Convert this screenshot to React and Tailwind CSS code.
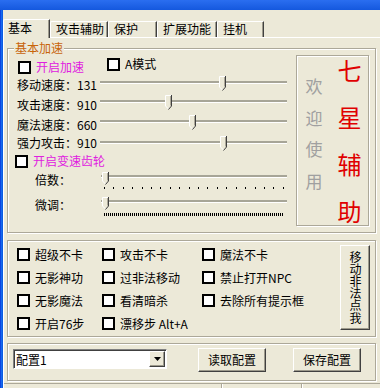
import React from 'react';

const etched = 'border border-[#aca899] shadow-[inset_1px_1px_0_#fff,1px_1px_0_#fff]';
const raised =
  'border border-t-white border-l-white border-r-[#404040] border-b-[#404040] shadow-[inset_-1px_-1px_0_#9d9a8c]';

const tabs = [
  { label: '基本', w: 'w-[47px]', active: true },
  { label: '攻击辅助', w: 'w-[58px]' },
  { label: '保护', w: 'w-[49px]' },
  { label: '扩展功能', w: 'w-[60px]' },
  { label: '挂机', w: 'w-[47px]' },
];

const speedRows = [
  { label: '移动速度：131', pos: 122, track: 'mt-[6px]', h: 'h-[20px]' },
  { label: '攻击速度：910', pos: 68, track: 'mt-[5px]', h: 'h-[20px]' },
  { label: '魔法速度：660', pos: 92, track: 'mt-[5px]', h: 'h-[20px]' },
  { label: '强力攻击：910', pos: 123, track: 'mt-[6px]', h: 'h-[16px]' },
];

const optionRows = [
  ['超级不卡', '攻击不卡', '魔法不卡'],
  ['无影神功', '过非法移动', '禁止打开NPC'],
  ['无影魔法', '看清暗杀', '去除所有提示框'],
  ['开启76步', '漂移步 Alt+A'],
];

const CheckBox = ({ label, className = '', labelClass = '' }) => (
  <div className={`flex items-center gap-[5px] ${className}`}>
    <span className="w-[13px] h-[13px] shrink-0 border-2 border-black bg-white" />
    <span className={`whitespace-nowrap leading-[14px] ${labelClass}`}>{label}</span>
  </div>
);

const Thumb = ({ small }) => {
  const h = small ? 13 : 15;
  const b = h - 4;
  return (
    <svg width="7" height={h} viewBox={`0 0 7 ${h}`}>
      <path d={`M0 0H7V${b}L3.5 ${h}L0 ${b}Z`} fill="#ECE9D8" />
      <path d={`M0.5 ${b}V0.5H6`} stroke="#fff" fill="none" />
      <path d={`M0.5 ${b}L3.5 ${h - 1}`} stroke="#fff" fill="none" />
      <path d={`M6.5 0V${b}L3.5 ${h - 0.5}`} stroke="#404040" fill="none" />
      <path d={`M5.5 1V${b - 0.5}`} stroke="#aca899" fill="none" />
    </svg>
  );
};

const Slider = ({ pos, width, trackClass, small, ticks }) => (
  <div className={`shrink-0 ${width}`}>
    <div className={`relative h-[3px] border-t-2 border-[#a7a597] bg-white ${trackClass}`}>
      <div className={`absolute ${small ? 'top-[-5px]' : 'top-[-7px]'}`} style={{ left: pos - 3 }}>
        <Thumb small={small} />
      </div>
    </div>
    {ticks === 'sparse' && (
      <div className="mt-[9px] px-[3px] flex justify-between">
        {Array.from({ length: 20 }).map((_, i) => (
          <span key={i} className="w-px h-[2px] bg-black" />
        ))}
      </div>
    )}
    {ticks === 'dense' && (
      <div className="mt-[10px] mx-[3px] h-[3px] bg-[repeating-linear-gradient(90deg,#000_0_1px,transparent_1px_2px)]" />
    )}
  </div>
);

export default function App() {
  return (
    <div className="w-[380px] h-[388px] overflow-hidden bg-[#ECE9D8] flex flex-col text-[12px] text-black font-['Noto_Sans_CJK_SC','Noto_Sans',sans-serif]">
      <div className="h-[10px] shrink-0 bg-gradient-to-b from-[#2a6ef0] to-[#1458de]" />
      <div className="flex flex-1 min-h-0">
        <div className="w-[3px] shrink-0 bg-[linear-gradient(90deg,#0831d9,#166aee,#0855dd)]" />
        <div className="flex-1 flex flex-col min-w-0">
          {/* tabs */}
          <div className="h-[27px] shrink-0 flex items-end">
            {tabs.map((t) =>
              t.active ? (
                <div
                  key={t.label}
                  className={`relative z-10 -mb-px h-[19px] ${t.w} bg-[#ECE9D8] border-t border-l border-white border-r border-r-[#404040] shadow-[inset_-1px_0_0_#9d9a8c] rounded-tl-[2px] pl-[4px] leading-[14px] pt-px`}
                >
                  {t.label}
                </div>
              ) : (
                <div
                  key={t.label}
                  className={`h-[16px] ${t.w} border-t border-l border-white border-r border-r-[#404040] shadow-[inset_-1px_0_0_#9d9a8c] rounded-tl-[2px] pl-[5px] leading-[14px]`}
                >
                  {t.label}
                </div>
              )
            )}
          </div>

          {/* pane */}
          <div className="flex-1 flex flex-col border-t border-l border-white">
            {/* 基本加速 */}
            <div className={`relative ml-[3px] mt-[10px] w-[369px] h-[185px] shrink-0 flex ${etched}`}>
              <span className="absolute left-[6px] top-[-8px] bg-[#ECE9D8] px-px leading-[14px] text-[#c8640a]">
                基本加速
              </span>
              <div className="w-[287px] flex flex-col pt-[8px]">
                <div className="h-[18px] flex items-start pl-[10px]">
                  <CheckBox label="开启加速" className="w-[89px] mt-[3px]" labelClass="text-[#e020e0]" />
                  <CheckBox label="A模式" />
                </div>
                {speedRows.map((r) => (
                  <div key={r.label} className={`${r.h} flex`}>
                    <div className="w-[92px] pl-[9px] flex items-center whitespace-nowrap">{r.label}</div>
                    <Slider pos={r.pos} width="w-[187px]" trackClass={r.track} />
                  </div>
                ))}
                <div className="h-[20px] flex items-center pl-[7px]">
                  <CheckBox label="开启变速齿轮" labelClass="text-[#e020e0]" />
                </div>
                <div className="h-[24px] flex items-start">
                  <div className="w-[93px] pl-[27px] pt-[3px] leading-[12px]">倍数：</div>
                  <Slider pos={3.5} width="w-[186px]" trackClass="mt-[4px]" small ticks="sparse" />
                </div>
                <div className="h-[25px] flex items-start">
                  <div className="w-[93px] pl-[27px] pt-[4px] leading-[12px]">微调：</div>
                  <Slider pos={3.5} width="w-[186px]" trackClass="mt-[5px]" small ticks="dense" />
                </div>
              </div>
              <div className={`mt-[6px] ml-px w-[73px] h-[171px] flex ${etched}`}>
                <div className="w-[34px] flex flex-col items-center pt-[14px] text-[17px] leading-[31.7px] text-[#a0a0a0]">
                  {['欢', '迎', '使', '用'].map((c) => (
                    <span key={c}>{c}</span>
                  ))}
                </div>
                <div className="flex-1 flex flex-col items-center justify-between py-[2px] text-[24px] leading-[24px] text-[#e00000]">
                  {['七', '星', '辅', '助'].map((c) => (
                    <span key={c}>{c}</span>
                  ))}
                </div>
              </div>
            </div>

            {/* options */}
            <div className={`ml-[3px] mt-[7px] w-[369px] h-[97px] shrink-0 flex ${etched}`}>
              <div className="w-[332px] pl-[9px] pt-[2px] flex flex-col">
                {optionRows.map((row, i) => (
                  <div key={i} className="h-[23px] flex items-center">
                    <CheckBox label={row[0]} className="w-[85px]" />
                    <CheckBox label={row[1]} className="w-[100px]" />
                    {row[2] && <CheckBox label={row[2]} />}
                  </div>
                ))}
              </div>
              <button
                type="button"
                className={`mt-[4px] w-[30px] h-[85px] flex items-center justify-center ${raised}`}
              >
                <span className="[writing-mode:vertical-rl] text-[12px] leading-[14px] tracking-[0.2px]">
                  移动非法点我
                </span>
              </button>
            </div>

            {/* config */}
            <div className={`ml-[3px] mt-[6px] w-[369px] h-[38px] shrink-0 flex items-start ${etched}`}>
              <div className="ml-[5px] mt-[5px] w-[154px] h-[20px] flex items-center bg-white border border-t-[#808080] border-l-[#808080] border-r-white border-b-white shadow-[inset_1px_1px_0_#404040]">
                <span className="flex-1 pl-[2px] pt-px leading-[14px]">配置1</span>
                <span className={`mr-px w-[16px] h-[16px] flex items-center justify-center bg-[#ECE9D8] ${raised}`}>
                  <svg width="7" height="4" viewBox="0 0 7 4">
                    <path d="M0 0H7L3.5 4Z" fill="#000" />
                  </svg>
                </span>
              </div>
              <button type="button" className={`ml-[31px] mt-[4px] w-[68px] h-[24px] leading-[14px] ${raised}`}>
                读取配置
              </button>
              <button type="button" className={`ml-[27px] mt-[4px] w-[68px] h-[24px] leading-[14px] ${raised}`}>
                保存配置
              </button>
            </div>

            {/* status */}
            <div className="mt-[2px] flex-1 flex border-t border-[#aca899]">
              <div className="w-[218px] border-r border-[#aca899] shadow-[1px_0_0_#fff]" />
              <div className="w-[80px] border-r border-[#aca899] shadow-[1px_0_0_#fff]" />
              <div className="flex-1" />
            </div>
          </div>
        </div>
      </div>
    </div>
  );
}
